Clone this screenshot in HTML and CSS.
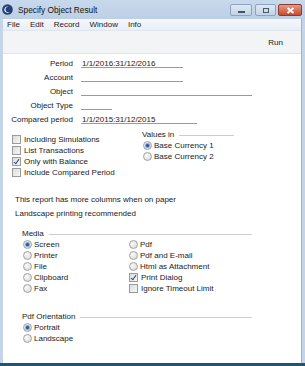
FILE: index.html
```html
<!DOCTYPE html>
<html>
  <head>
    <meta charset="UTF-8">
    <title>Specify Object Result</title>
    <link rel="stylesheet" href="styles.css">
  </head>
  <body>
    <div id="window">
      <div id="titlebar">
        <svg class="app-icon" width="11" height="11" viewBox="0 0 11 11">
          <circle cx="5.5" cy="5.5" r="5.3" fill="#23427a"/>
          <path d="M2.3 6.2 C2.6 8.6 5.6 9.6 7.8 7.9 C6 8.6 3.9 8 3.5 6 C3.2 4.4 4.4 2.8 6.2 2.7 C4.2 2.2 2.1 3.8 2.3 6.2 Z" fill="#fff"/>
        </svg>
        <span class="title">Specify Object Result</span>
        <div class="win-buttons">
          <span class="wbtn min"><i></i></span>
          <span class="wbtn max"><i></i></span>
          <span class="wbtn close">
            <svg width="9" height="7" viewBox="0 0 9 7"><path d="M1.5 1 L7.5 6 M7.5 1 L1.5 6" stroke="#fff" stroke-width="2"/></svg>
          </span>
        </div>
      </div>
      <div id="frame">
        <div id="menubar">
          <span>File</span>
          <span>Edit</span>
          <span>Record</span>
          <span>Window</span>
          <span>Info</span>
        </div>
        <div id="toolbar">
          <span class="run">Run</span>
        </div>
        <div id="content">
          <div class="form">
            <label>Period</label>
            <span class="field w-period">1/1/2016:31/12/2016</span>
            <label>Account</label>
            <span class="field w-period"></span>
            <label>Object</label>
            <span class="field w-object"></span>
            <label>Object Type</label>
            <span class="field w-type"></span>
            <label>Compared period</label>
            <span class="field w-compared">1/1/2015:31/12/2015</span>
          </div>

          <div class="options">
            <div class="checks">
              <div class="opt"><span class="check"></span>Including Simulations</div>
              <div class="opt"><span class="check"></span>List Transactions</div>
              <div class="opt"><span class="check on"></span>Only with Balance</div>
              <div class="opt"><span class="check"></span>Include Compared Period</div>
            </div>
            <div class="group values">
              <div class="group-head">Values in</div>
              <div class="opt"><span class="radio on"></span>Base Currency 1</div>
              <div class="opt"><span class="radio"></span>Base Currency 2</div>
            </div>
          </div>

          <div class="notes">
            <p>This report has more columns when on paper</p>
            <p>Landscape printing recommended</p>
          </div>

          <div class="group media">
            <div class="group-head">Media</div>
            <div class="cols">
              <div>
                <div class="opt"><span class="radio on"></span>Screen</div>
                <div class="opt"><span class="radio"></span>Printer</div>
                <div class="opt"><span class="radio"></span>File</div>
                <div class="opt"><span class="radio"></span>Clipboard</div>
                <div class="opt"><span class="radio"></span>Fax</div>
              </div>
              <div>
                <div class="opt"><span class="radio"></span>Pdf</div>
                <div class="opt"><span class="radio"></span>Pdf and E-mail</div>
                <div class="opt"><span class="radio"></span>Html as Attachment</div>
                <div class="opt"><span class="check on"></span>Print Dialog</div>
                <div class="opt"><span class="check"></span>Ignore Timeout Limit</div>
              </div>
            </div>
          </div>

          <div class="group orientation">
            <div class="group-head">Pdf Orientation</div>
            <div class="opt"><span class="radio on"></span>Portrait</div>
            <div class="opt"><span class="radio"></span>Landscape</div>
          </div>
        </div>
      </div>
    </div>
  </body>
</html>
```

FILE: styles.css
```css
html,
body {
  margin: 0;
  padding: 0;
  font-family: "Liberation Sans", Arial, sans-serif;
  font-size: 8px;
  color: #1a1a1a;
}

#window {
  width: 305px;
  height: 366px;
  box-sizing: border-box;
  display: flex;
  flex-direction: column;
  background: #c4d5e9;
  border-bottom: 3px solid #1c5674;
}

/* Title bar */
#titlebar {
  height: 19px;
  display: flex;
  align-items: center;
  background: linear-gradient(#c9d9ec, #bccfe5);
  padding-left: 2px;
}

.app-icon {
  margin-right: 5px;
}

.title {
  font-size: 8.3px;
  color: #111;
}

.win-buttons {
  margin-left: auto;
  margin-right: 3px;
  display: flex;
  gap: 2px;
  align-self: flex-start;
  margin-top: 4px;
}

.wbtn {
  width: 20px;
  height: 10px;
  border: 1px solid #8ca4c0;
  border-radius: 2px;
  background: linear-gradient(#dfe8f3, #c2d3e6);
  display: flex;
  align-items: center;
  justify-content: center;
}

.wbtn.min {
  margin-right: 1px;
}

.wbtn.min i {
  width: 7px;
  height: 2px;
  background: #3d536d;
  margin-top: 3px;
}

.wbtn.max {
  width: 19px;
}

.wbtn.max i {
  width: 4px;
  height: 3px;
  border: 1px solid #45596f;
}

.wbtn.close {
  width: 22px;
  border-color: #8d3b2c;
  background: linear-gradient(#e49a87, #c84a33);
}

/* Frame */
#frame {
  flex: 1;
  display: flex;
  flex-direction: column;
  margin: 0 3px 0 3px;
  background: #fff;
  border-right: 1px solid #9fb4cb;
}

#menubar {
  height: 11px;
  display: flex;
  align-items: center;
  background: linear-gradient(#f5f8fc, #e9eff7);
  border-bottom: 1px solid #dfe6ee;
  padding-left: 4px;
  gap: 10px;
  font-size: 8px;
}

#toolbar {
  height: 22px;
  display: flex;
  align-items: center;
  justify-content: flex-end;
  background: #f3f4f6;
  border-bottom: 1px solid #e2e4e7;
  padding-right: 18px;
}

#content {
  flex: 1;
  padding-top: 3px;
}

/* Header fields */
.form {
  display: grid;
  grid-template-columns: 70px auto;
  column-gap: 8px;
  grid-auto-rows: 14px;
}

.form label {
  text-align: right;
  line-height: 14px;
}

.field {
  display: block;
  height: 11px;
  box-sizing: border-box;
  border-bottom: 1px solid #9a9a9a;
  line-height: 13px;
  padding-left: 1px;
}

.w-period {
  width: 102px;
}

.w-object {
  width: 171px;
}

.w-type {
  width: 31px;
}

.w-compared {
  width: 116px;
}

/* Options */
.options {
  display: flex;
  margin-top: 2px;
}

.checks {
  width: 130px;
  padding-left: 9px;
  padding-top: 5px;
}

.opt {
  display: flex;
  align-items: center;
  height: 11px;
  white-space: nowrap;
}

.group-head {
  display: flex;
  align-items: center;
  height: 11px;
}

.group-head::after {
  content: "";
  flex: 1;
  height: 1px;
  background: #cdcdcd;
  margin-left: 5px;
  margin-top: 2px;
}

.values {
  width: 92px;
}

.values .opt {
  padding-left: 1px;
}

.check {
  width: 7px;
  height: 7px;
  border: 1px solid #9b9b9b;
  background: linear-gradient(135deg, #dcdcdc, #f7f7f7);
  margin-right: 3px;
  position: relative;
}

.check.on::after {
  content: "";
  position: absolute;
  left: 2px;
  top: 0;
  width: 2px;
  height: 5px;
  border: solid #2c4a8c;
  border-width: 0 1px 1px 0;
  transform: rotate(35deg);
}

.radio {
  width: 7px;
  height: 7px;
  border-radius: 50%;
  border: 1px solid #a2a2a2;
  background: radial-gradient(circle at 35% 35%, #fafafa, #d6d6d6);
  margin-right: 2px;
  position: relative;
}

.radio.on::after {
  content: "";
  position: absolute;
  left: 2px;
  top: 2px;
  width: 3px;
  height: 3px;
  border-radius: 50%;
  background: #23569a;
  box-shadow: 0 0 1px 1px #6fa0d8;
}

/* Notes */
.notes {
  padding-left: 12px;
  margin-top: 15px;
}

.notes p {
  margin: 0;
  line-height: 14px;
}

/* Groups */
.media,
.orientation {
  width: 230px;
  margin-left: 19px;
}

.media {
  margin-top: 7px;
}

.media .opt,
.orientation .opt {
  padding-left: 1px;
}

.cols {
  display: grid;
  grid-template-columns: 106px auto;
}

.orientation {
  margin-top: 17px;
}
```
